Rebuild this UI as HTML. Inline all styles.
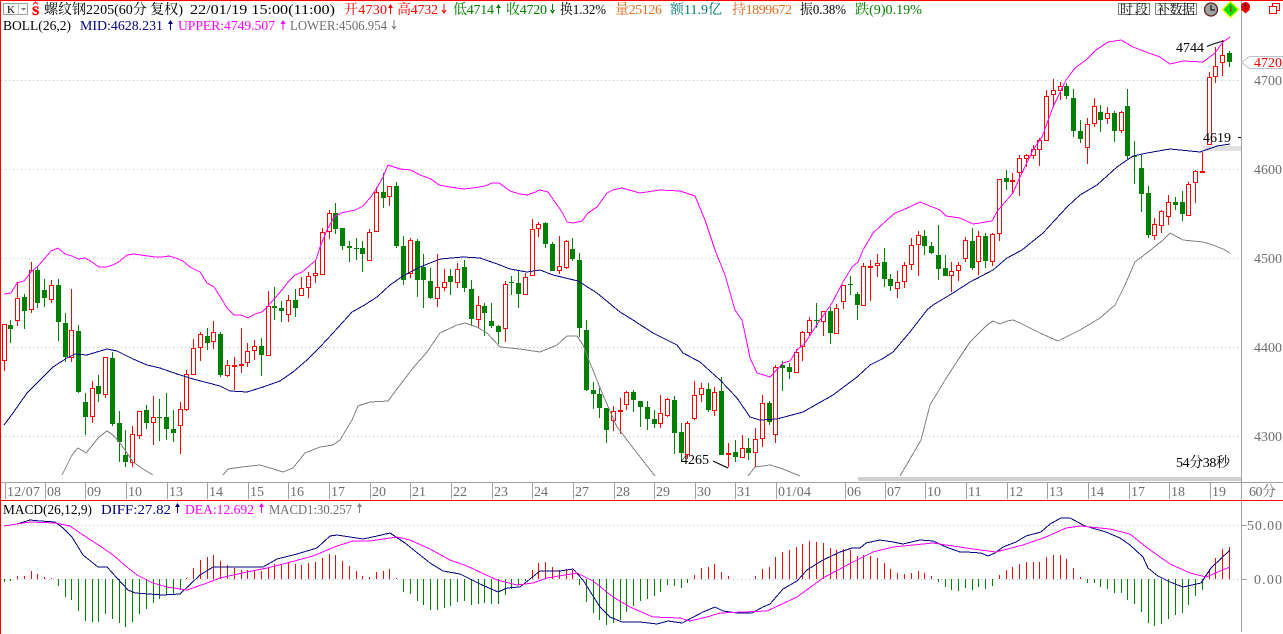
<!DOCTYPE html>
<html><head><meta charset="utf-8"><title>螺纹钢2205</title>
<style>
html,body{margin:0;padding:0;background:#fff;width:1283px;height:634px;overflow:hidden}
svg{display:block;position:absolute;left:0;top:0}
text{font-family:"Liberation Serif","Noto Serif CJK SC",serif;font-size:14px;fill:#000;white-space:pre}
.g text,text.g{fill:#6e6e6e}
.l{fill:none;stroke-width:1;shape-rendering:crispEdges}
.cr{shape-rendering:crispEdges}
</style></head><body>
<svg id="s" width="1283" height="634" viewBox="0 0 1283 634" xmlns="http://www.w3.org/2000/svg">
<defs>
<path id="up" d="M2.5 0L5 4H0ZM2 3h1v7H2z"/>
<path id="dn" d="M2.5 10L5 6H0ZM2 0h1v7H2z"/>
</defs>
<!-- frame -->
<g class="cr">
<rect x="0" y="0" width="1283" height="1" fill="#f00"/>
<rect x="0" y="0" width="1" height="634" fill="#f00"/>
<rect x="1" y="482" width="1282" height="1" fill="#a0a0a0"/>
<rect x="0" y="500" width="1283" height="1" fill="#f00"/>
<rect x="1241" y="1" width="1" height="631" fill="#a0a0a0"/>
<rect x="1203" y="146" width="38" height="5" fill="#e0e0e0"/>
<rect x="858" y="477" width="383" height="4" fill="#d0d0d0"/>
<path d="M1 80.5H1241M1 169.5H1241M1 258.5H1241M1 347.5H1241M1 436.5H1241M1 525.5H1241M1 579.5H1241" stroke="#c0c0c0" stroke-dasharray="1 3" fill="none"/>
<path d="M1241 525.5h6M1241 579.5h6" stroke="#a0a0a0" fill="none"/>
<path d="M1238 137.5h3" stroke="#000" fill="none"/>
<path d="M5.5 482V499M45.5 482V499M85.5 482V499M126.5 482V499M167.5 482V499M207.5 482V499M248.5 482V499M288.5 482V499M329.5 482V499M370.5 482V499M410.5 482V499M451.5 482V499M492.5 482V499M532.5 482V499M573.5 482V499M614.5 482V499M654.5 482V499M695.5 482V499M735.5 482V499M776.5 482V499M845.5 482V499M885.5 482V499M925.5 482V499M966.5 482V499M1007.5 482V499M1047.5 482V499M1088.5 482V499M1129.5 482V499M1169.5 482V499M1210.5 482V499" stroke="#a0a0a0" fill="none"/>
</g>
<g id="cg" class="cr"></g>
<g id="hg" class="cr"></g>
<!-- BOLL lines -->
<polyline class="l" stroke="#ff00ff" points="4,294 11,293 17,283 24,281 31,272 38,266 45,258 51,251 58,248 65,254 72,256 78,259 85,258 92,262 99,267 106,267 113,265 120,261 127,255 134,254 141,255 148,256 155,257 162,257 169,256 176,258 183,261 190,267 200,272 207,283 214,287 221,298 227,308 234,315 241,315 248,318 255,314 262,312 268,306 275,298 282,290 288,282 295,275 302,272 309,266 316,260 320,247 327,230 334,217 341,213 355,210 363,206 370,198 377,188 383,177 388,165 400,169 411,170 420,175 431,179 439,185 450,187 464,189 473,188 485,186 492,183 499,183 510,191 520,194 527,195 533,193 540,190 548,192 555,202 562,212 567,222 573,223 582,221 588,213 597,207 607,193 613,190 622,188 640,193 660,190 680,191 695,196 705,220 715,250 725,275 735,310 742,320 747,343 750,358 757,373 770,377 783,363 790,361 797,350 805,343 818,323 832,303 843,282 852,267 858,262 863,250 873,233 887,220 895,213 903,210 920,202 940,210 946,216 960,218 973,224 980,223 992,221 998,210 1013,193 1020,177 1033,150 1042,137 1053,107 1066,80 1075,68 1086,60 1096,50 1108,42 1121,40 1133,47 1146,52 1160,57 1170,64 1183,61 1203,62 1215,53 1223,42 1230,37"/>
<polyline class="l" stroke="#000080" points="4,425 13,413 27,393 40,380 53,367 67,358 75,354 87,355 97,352 107,349 117,351 133,359 147,365 160,368 177,374 193,379 220,386 230,391 247,392 263,387 280,381 293,372 307,360 320,347 333,333 352,312 363,306 377,297 390,285 403,276 420,267 440,259 463,257 480,258 500,265 510,269 527,272 540,270 553,275 578,281 597,293 620,312 633,320 653,333 677,345 683,353 700,362 720,380 737,398 750,417 760,420 777,419 803,412 833,395 857,377 870,365 882,359 893,352 910,332 927,310 933,305 953,293 970,282 993,270 1007,258 1022,250 1043,233 1067,207 1080,195 1097,185 1117,167 1133,156 1147,153 1170,149 1200,152 1217,146 1230,144"/>
<g stroke="#808080">
<polyline class="l" points="62,475 72,455 78,448 86,453 95,442 99,437 107,431 113,435 120,443 127,453 133,462 143,469 153,475"/>
<polyline class="l" points="223,475 228,469 242,467 260,465 283,472 293,468 305,453 320,447 333,445 340,440 352,420 358,406 370,402 388,401 400,385 413,368 427,352 440,333 457,325 465,323 477,327 487,333 500,347 520,349 540,352 557,345 567,336 577,336 583,345 590,363 603,395 617,427 637,453 655,476"/>
<polyline class="l" points="748,476 755,467 770,465 783,469 800,476"/>
<polyline class="l" points="900,476 921,440 930,405 945,380 958,360 970,342 977,335 987,325 993,321 1000,324 1007,321 1013,320 1020,323 1040,333 1058,341 1080,330 1100,318 1115,305 1125,285 1135,262 1152,249 1163,240 1170,233 1183,240 1203,242 1213,245 1223,249 1230,253"/>
</g>
<!-- MACD lines -->
<polyline class="l" stroke="#000080" points="4,526 17,524 30,520 40,521 55,522 63,528 72,537 83,555 98,567 107,567 117,578 128,590 135,593 163,595 180,594 200,575 213,567 263,567 277,559 297,554 317,548 330,536 337,535 363,539 377,536 390,533 405,543 430,563 443,571 460,574 480,584 498,592 507,588 520,587 540,571 547,571 560,571 573,569 583,580 600,607 610,617 622,622 640,622 657,624 668,621 682,623 703,612 715,607 723,611 737,613 752,613 763,607 770,604 783,589 797,581 807,570 823,560 840,552 852,548 860,548 866,543 880,540 893,542 903,544 920,540 933,541 946,547 960,552 966,552 981,553 988,556 995,553 1003,547 1016,542 1026,536 1041,532 1050,524 1061,518 1070,518 1085,526 1106,532 1120,538 1130,545 1143,557 1148,568 1158,576 1170,582 1183,587 1201,583 1211,568 1230,550"/>
<polyline class="l" stroke="#ff00ff" points="4,526 30,522 55,523 70,526 83,535 100,546 113,555 127,567 137,575 153,583 167,587 187,590 207,583 220,578 247,572 267,568 287,563 313,556 337,546 353,541 370,541 397,537 410,540 430,549 450,560 467,566 497,580 517,585 533,583 547,578 577,573 593,581 613,597 630,607 653,617 680,618 690,621 707,617 720,613 767,611 797,597 823,578 853,562 873,552 893,547 933,543 953,546 973,549 996,552 1023,545 1046,537 1066,528 1080,526 1110,529 1130,534 1146,547 1170,564 1190,573 1206,577 1230,567"/>
<!-- header -->
<g class="cr"><rect x="3.5" y="3.5" width="24" height="11" fill="#fff" stroke="#a0a0a0"/><path d="M18.5 3.5v11" stroke="#c0c0c0"/><path d="M21 8h5l-2.500 3z" fill="#808080"/></g>
<text x="7" y="13" style="font-size:11px">K</text>
<text x="32" y="15" style="font-size:13px;font-weight:bold;fill:#f00;stroke:#f00;stroke-width:.5px">S</text>
<path d="M33 4.500L35.500 2L38 4.500" stroke="#f00" fill="none"/>
<text x="44" y="14" textLength="139" lengthAdjust="spacingAndGlyphs">螺纹钢2205(60分 复权)</text>
<text x="190" y="14" textLength="145" lengthAdjust="spacingAndGlyphs">22/01/19 15:00(11:00)</text>
<text x="344" y="14" style="fill:#f00" textLength="43">开4730</text>
<text x="397" y="14" style="fill:#f00" textLength="41">高4732</text>
<text x="453" y="14" style="fill:#008000" textLength="41">低4714</text>
<text x="506" y="14" style="fill:#008000" textLength="41">收4720</text>
<text x="560" y="14" textLength="46" lengthAdjust="spacingAndGlyphs">换1.32%</text>
<text x="615" y="14" style="fill:#e06c20" textLength="47">量25126</text>
<text x="670" y="14" style="fill:#007878" textLength="52">额11.9亿</text>
<text x="732" y="14" style="fill:#e06c20" textLength="60">持1899672</text>
<text x="800" y="14" textLength="46" lengthAdjust="spacingAndGlyphs">振0.38%</text>
<text x="855" y="14" style="fill:#008000" textLength="67" lengthAdjust="spacingAndGlyphs">跌(9)0.19%</text>
<use href="#up" x="388" y="4" fill="#f00"/><use href="#dn" x="441.500" y="4" fill="#f00"/>
<use href="#up" x="496" y="4" fill="#008000"/><use href="#dn" x="550" y="4" fill="#008000"/>
<text x="3" y="30" textLength="68" lengthAdjust="spacingAndGlyphs">BOLL(26,2)</text>
<text x="80" y="30" style="fill:#000080" textLength="83" lengthAdjust="spacingAndGlyphs">MID:4628.231</text>
<use href="#up" x="168" y="20" fill="#000080"/>
<text x="178" y="30" style="fill:#ff00ff" textLength="97" lengthAdjust="spacingAndGlyphs">UPPER:4749.507</text>
<use href="#up" x="280.500" y="20" fill="#ff00ff"/>
<text x="290" y="30" style="fill:#6e6e6e" textLength="97" lengthAdjust="spacingAndGlyphs">LOWER:4506.954</text>
<use href="#dn" x="391.500" y="20" fill="#808080"/>
<!-- toolbar -->
<g class="cr" fill="#fff" stroke="#808080"><rect x="1118.500" y="3.500" width="31" height="11"/><rect x="1155.500" y="3.500" width="41" height="11"/></g>
<text x="1120" y="14" style="font-size:13px" textLength="28">时段</text>
<text x="1157" y="14" style="font-size:13px" textLength="38">补数据</text>
<circle cx="1211" cy="9.500" r="6.500" fill="#a0a0a0" stroke="#602020" stroke-width="1.300"/>
<path d="M1211 5v5h4" stroke="#000" fill="none"/>
<path d="M1230.500 1.500L1238.500 9.500L1230.500 17.500L1222.500 9.500Z" fill="#00e000" stroke="#e8ff00" stroke-width="1.500"/>
<rect x="1230" y="6" width="1.500" height="6" fill="#a04000"/>
<circle cx="1245.500" cy="6.500" r="4.500" fill="#e00000"/><path d="M1240.500 9h10l-5 4.500z" fill="#e00000"/><rect x="1245" y="3" width="1" height="6" fill="#600000"/>
<g class="cr" fill="none" stroke="#f00"><rect x="1272.500" y="3.500" width="7" height="7"/><rect x="1269.500" y="6.500" width="7" height="7" fill="#fff"/></g>
<!-- annotations -->
<text x="1176" y="52">4744</text>
<path d="M1207 46.500Q1215 43 1224 41" stroke="#000" fill="none"/>
<text x="1203" y="142">4619</text>
<text x="681" y="464">4265</text>
<path d="M713 461L728 468" stroke="#000" fill="none"/>
<text x="1176" y="467" textLength="54">54分38秒</text>
<!-- right axis -->
<polygon class="cr" points="1241.500,62.500 1249.500,56.500 1283,56.500 1283,68.500 1249.500,68.500" fill="#fff" stroke="#c0c0c0"/>
<text x="1254" y="67" style="fill:#f00">4720</text>
<g class="g">
<text x="1254" y="85">4700</text><text x="1254" y="174">4600</text><text x="1254" y="263">4500</text><text x="1254" y="352">4400</text><text x="1254" y="441">4300</text>
<text x="1247" y="530" textLength="35">50.00</text><text x="1254" y="584" textLength="28">0.00</text>
<text x="1249" y="496" textLength="27">60分</text>
<text x="7" y="496" textLength="33">12/07</text><text x="47" y="496">08</text><text x="87" y="496">09</text><text x="128" y="496">10</text><text x="169" y="496">13</text><text x="209" y="496">14</text><text x="250" y="496">15</text><text x="290" y="496">16</text><text x="331" y="496">17</text><text x="372" y="496">20</text><text x="412" y="496">21</text><text x="453" y="496">22</text><text x="494" y="496">23</text><text x="534" y="496">24</text><text x="575" y="496">27</text><text x="616" y="496">28</text><text x="656" y="496">29</text><text x="697" y="496">30</text><text x="737" y="496">31</text><text x="778" y="496" textLength="33">01/04</text><text x="847" y="496">06</text><text x="887" y="496">07</text><text x="927" y="496">10</text><text x="968" y="496">11</text><text x="1009" y="496">12</text><text x="1049" y="496">13</text><text x="1090" y="496">14</text><text x="1131" y="496">17</text><text x="1171" y="496">18</text><text x="1212" y="496">19</text>
</g>
<!-- MACD header -->
<text x="3" y="514" textLength="89" lengthAdjust="spacingAndGlyphs">MACD(26,12,9)</text>
<text x="101" y="514" style="fill:#000080" textLength="70" lengthAdjust="spacingAndGlyphs">DIFF:27.82</text>
<use href="#up" x="175" y="503" fill="#000080"/>
<text x="185" y="514" style="fill:#ff00ff" textLength="69" lengthAdjust="spacingAndGlyphs">DEA:12.692</text>
<use href="#up" x="259" y="503" fill="#ff00ff"/>
<text x="269" y="514" style="fill:#6e6e6e" textLength="83" lengthAdjust="spacingAndGlyphs">MACD1:30.257</text>
<use href="#up" x="357" y="503" fill="#808080"/>
</svg>
<script>
var C="r324,360,324,371 g325,329,320,343 r298,320,282,326 g297,311,294,329 r270,309,262,313 g270,303,267,308 g290,298,279,307 r285,299,280,303 g285,322,279,341 g323,357,313,362 r330,357,289,362 g331,392,325,393 g402,417,393,435 r388,416,381,423 g386,394,375,402 r357,394,357,398 g358,424,352,426 g423,442,411,462 g455,462,430,467 r434,462,426,467 r411,435,411,439 g410,423,405,429 r417,422,396,445 g417,417,399,441 g417,429,393,440 g429,433,410,442 r409,425,402,454 r374,409,370,411 r348,374,339,374 r334,347,332,361 g336,343,328,350 r332,341,321,349 g334,375,332,377 r365,375,360,377 r365,365,357,390 r364,365,328,373 r351,362,343,367 r346,350,340,360 g346,355,338,376 r306,355,291,356 g306,308,287,320 g308,311,301,322 r300,314,295,322 g300,308,289,317 r288,295,277,295 r276,287,272,298 r273,275,261,283 r232,274,228,275 r213,231,210,239 g213,229,203,234 g228,246,228,250 g246,248,241,262 g248,248,238,260 g248,254,241,272 r232,260,229,261 r192,231,187,231 g192,198,173,208 r186,196,186,206 g186,246,182,248 g246,280,236,285 r240,273,238,278 g241,280,239,297 g267,280,254,308 g281,298,268,299 r287,298,254,307 r282,287,269,291 g276,282,269,295 r269,282,263,288 g267,288,260,292 g289,319,280,326 r305,319,296,328 g306,313,303,336 g321,326,303,328 g326,332,325,344 r284,328,281,342 g282,283,276,295 g283,294,270,308 r277,294,273,295 r229,275,219,276 r224,228,222,237 g223,244,222,248 g244,271,242,271 r266,270,236,274 r241,267,240,269 g249,259,238,261 g260,328,253,337 g330,390,320,391 g390,394,382,409 g394,408,388,418 g408,430,408,443 r411,420,406,431 r410,410,398,434 r392,404,391,410 g392,400,390,412 g401,407,401,427 g407,419,401,430 g419,424,410,428 r413,423,395,428 r399,415,398,417 g400,433,396,454 g432,453,423,462 r423,454,421,459 r395,418,381,420 r388,394,383,402 g389,410,383,412 r392,410,387,416 g391,455,377,455 r453,454,443,467 g452,457,440,462 r448,457,435,457 g448,453,438,460 r439,452,428,467 r403,438,395,447 g403,422,401,425 r367,434,365,443 g365,368,361,391 g367,372,363,379 r352,372,349,373 r332,346,331,361 r320,332,317,336 g320,320,303,328 r311,321,311,336 g311,333,307,344 r308,333,304,334 r285,301,285,309 g284,284,276,295 g294,305,292,320 r266,305,263,306 r266,266,260,301 r263,265,254,277 g262,279,248,287 g279,286,274,291 r282,288,271,298 r265,281,262,288 r245,264,238,270 r235,244,231,276 g236,246,230,255 g246,253,242,254 g255,269,225,280 g268,276,255,276 r271,275,262,292 r265,270,262,281 r240,258,237,262 g241,268,228,270 r236,261,231,275 g236,261,233,268 r234,261,233,266 r179,233,179,241 g178,182,170,190 r180,181,173,194 r158,172,155,196 r155,158,154,167 r149,155,145,159 r140,149,138,166 r96,140,90,140 r90,94,79,107 r86,90,82,100 g86,96,83,99 g98,131,89,137 g131,139,120,143 r124,147,118,164 r106,123,98,127 g112,120,105,132 r113,118,107,124 g113,131,111,142 r112,130,111,133 g106,156,89,159 g156,157,141,184 g168,194,155,212 g193,235,186,238 r224,235,218,240 r211,225,210,233 r202,216,195,225 g202,205,197,210 g202,214,191,221 r184,215,182,216 r171,182,170,203 r171,171,152,173 r77,144,72,145 r66,76,47,83 r55,62,40,76 g53,62,51,67".split(" ");
var H="g582 g581 r576 r576 r571 r574 r577 r578 g586 g597 g600 g611 g621 g622 g622 g614 g619 g623 g627 g622 g614 g609 g603 g599 g595 g595 g590 r578 r568 r560 r557 r555 r561 r565 r568 r570 r570 r570 r571 r568 r564 r564 r563 r564 r565 r563 r562 r558 r554 r555 r561 r566 r571 r576 r577 r572 r571 r569 r578 g592 g594 g601 g605 g610 g610 g608 g606 g602 g601 g605 g604 g603 g604 g604 g595 g589 g585 g581 r570 r563 r562 r567 r570 r569 r570 g585 g602 g613 g620 g625 g623 g620 g612 g606 g601 g599 g596 g592 g585 g586 g588 g583 r575 r568 r567 r564 r572 r576 r579 r579 r579 r576 r569 r567 r557 r552 r550 r547 r544 r541 r542 r543 r548 r550 r549 r550 r556 r555 r556 r558 r563 r569 r573 r574 r573 r571 r573 r576 g582 g587 g590 g591 g588 g590 g587 g589 g586 r575 r570 r567 r564 r562 r562 r562 r557 r555 r555 r559 r568 r577 g583 g583 g587 g589 g593 g593 g600 g604 g612 g623 g626 g624 g619 g615 g613 g605 g596 g590 r571 r558 r549 r547".split(" ");
var R="#ff0000",G="#008000",a="",b="";
function px(i){return Math.round(3.6+6.77*i)}
function rc(x,y,w,h,c){return '<rect x="'+x+'" y="'+y+'" width="'+w+'" height="'+h+'" fill="'+c+'"/>'}
C.forEach(function(s,i){
 var red=s[0]=="r",p=s.slice(1).split(",").map(Number),t=p[0],e=p[1],h=p[2],l=p[3],x=px(i),c=red?R:G;
 a+=rc(x,h,1,Math.max(1,l-h),c);
 if(e-t<=1){a+=rc(x-2,t,5,red?2:1,c)}
 else if(red){a+=rc(x-2,t,5,e-t+1,R)+rc(x-1,t+1,3,e-t-1,"#ffffff")}
 else{a+=rc(x-2,t,5,e-t,G)}
});
H.forEach(function(s,i){
 var y=+s.slice(1),x=px(i),red=s[0]=="r",t=Math.min(y,579),d=Math.abs(y-579);
 if(d>0)b+=rc(x,red?t:579,1,d,red?R:G);
});
document.getElementById("cg").innerHTML=a;
document.getElementById("hg").innerHTML=b;
</script>
</body></html>
